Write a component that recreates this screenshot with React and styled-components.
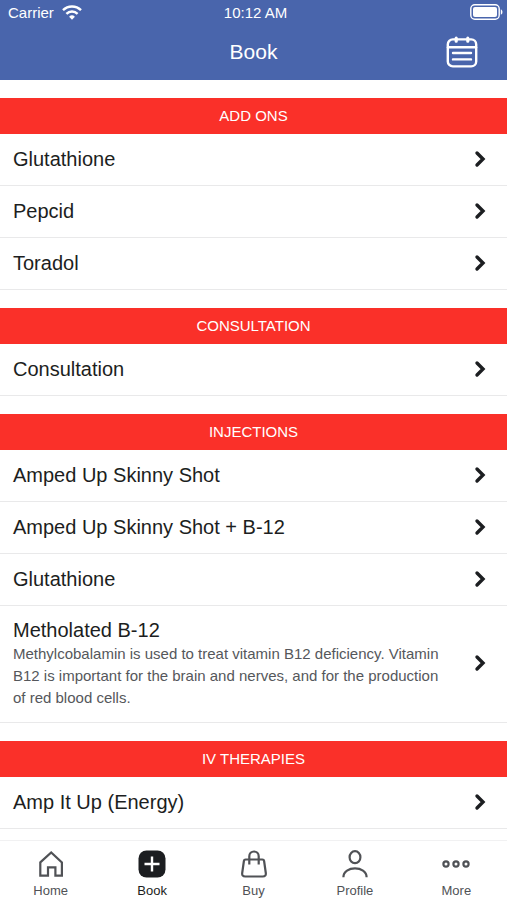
import React, { useState } from 'react'
import styled, { createGlobalStyle } from 'styled-components'

const GlobalStyle = createGlobalStyle`
  * {
    box-sizing: border-box;
  }
  body {
    margin: 0;
    background-color: #ffffff;
    color: #1c1e21;
    font-family: "Liberation Sans", Arial, sans-serif;
  }
`
const Container = styled.div`
  height: 100vh;
  display: flex;
  flex-direction: column;
  overflow: hidden;
`
const Header = styled.header`
  flex-shrink: 0;
  background-color: #4965ac;
  color: #ffffff;
`
const StatusBar = styled.div`
  height: 24px;
  padding: 0 4px 0 8px;
  display: grid;
  grid-template-columns: 1fr auto 1fr;
  align-items: center;
  font-size: 15px;
`
const Carrier = styled.div`
  display: flex;
  align-items: center;
  gap: 8px;
`
const Battery = styled.div`
  display: flex;
  justify-content: flex-end;
`
const TitleBar = styled.div`
  height: 56px;
  padding: 0 29px;
  display: grid;
  grid-template-columns: 1fr auto 1fr;
  align-items: center;
`
const Title = styled.h1`
  grid-column: 2;
  margin: 0;
  font-size: 21px;
  font-weight: 400;
`
const CalendarButton = styled.button`
  justify-self: end;
  display: flex;
  padding: 0;
  border: none;
  background: none;
  color: inherit;
  cursor: pointer;
`
const Content = styled.main`
  flex: 1;
  min-height: 0;
  overflow: hidden;
`
const Section = styled.section`
  padding-top: 18px;
`
const SectionTitle = styled.h2`
  margin: 0;
  height: 36px;
  background-color: #fa3029;
  color: #ffffff;
  font-size: 15px;
  font-weight: 400;
  line-height: 36px;
  text-align: center;
  text-transform: uppercase;
`
const Row = styled.a`
  min-height: 52px;
  padding: 11px 20px 13px 13px;
  display: flex;
  align-items: center;
  gap: 20px;
  border-bottom: 1px solid #e9e9ea;
  color: inherit;
  text-decoration: none;
`
const RowText = styled.div`
  flex: 1;
`
const Name = styled.div`
  font-size: 20px;
  line-height: 26px;
`
const Desc = styled.p`
  margin: 0;
  color: #55575b;
  font-size: 15px;
  line-height: 22px;
`
const TabBar = styled.nav`
  flex-shrink: 0;
  height: 60px;
  display: flex;
  border-top: 1px solid #f1f1f2;
  background-color: #ffffff;
`
const Tab = styled.button`
  flex: 1;
  padding: 9px 0 0;
  display: flex;
  flex-direction: column;
  align-items: center;
  gap: 5px;
  border: none;
  background: none;
  color: ${(props) => (props.$active ? '#1c1e21' : '#505256')};
  font-family: inherit;
  font-size: 13px;
  line-height: 16px;
  cursor: pointer;
`

const WifiIcon = () => (
  <svg width="20" height="15" viewBox="0 0 20 15" fill="none" stroke="currentColor" strokeWidth="2.4" aria-hidden="true">
    <path d="M1 5.2a12.7 12.7 0 0 1 18 0" />
    <path d="M4.4 8.8a7.9 7.9 0 0 1 11.2 0" />
    <path d="M10 14.8l-2.9-3a4.1 4.1 0 0 1 5.8 0z" fill="currentColor" stroke="none" />
  </svg>
)

const BatteryIcon = () => (
  <svg width="33" height="16" viewBox="0 0 33 16" fill="none" aria-hidden="true">
    <rect x="0.8" y="0.8" width="28.4" height="14.4" rx="4" stroke="currentColor" strokeWidth="1.4" />
    <rect x="3" y="3" width="24" height="10" rx="2" fill="currentColor" />
    <path d="M30.8 5.2c2.2 1 2.2 4.6 0 5.6z" fill="currentColor" />
  </svg>
)

const CalendarIcon = () => (
  <svg width="32" height="32" viewBox="0 0 32 32" fill="none" stroke="currentColor" strokeWidth="2.4" strokeLinecap="round" aria-hidden="true">
    <rect x="1.8" y="3.4" width="28.400" height="27" rx="5" />
    <path d="M2 11.200h28" />
    <path d="M7 17h18M7 23.400h18" />
    <path d="M10.200 2.200v3M21.800 2.200v3" strokeWidth="3.200" />
  </svg>
)

const ChevronIcon = () => (
  <svg width="14" height="18" viewBox="0 0 14 18" fill="none" stroke="currentColor" strokeWidth="3.4" strokeLinecap="round" aria-hidden="true">
    <path d="M4 3L10 9L4 15" />
  </svg>
)

const icons = {
  home: (
    <path d="M3.3 12.4L14.200 2.400l10.700 10v13.200h-6.500v-8.300h-7.400v8.300H3.300z" />
  ),
  book: (
    <>
      <rect x="0.5" y="0.5" width="27" height="27" rx="8" fill="currentColor" stroke="none" />
      <path d="M14 6.5v15M6.5 14h15" stroke="#ffffff" strokeWidth="2.4" />
    </>
  ),
  buy: (
    <>
      <path d="M5.6 9.500h16.800q1.500 0 1.700 1.500l1.700 12q.4 3.500-3 3.500H5.200q-3.400 0-3-3.500l1.700-12q.2-1.500 1.700-1.500z" />
      <path d="M9.300 14.500V6.200a4.700 4.700 0 0 1 9.400 0v8.300" />
    </>
  ),
  profile: (
    <>
      <ellipse cx="14" cy="7.2" rx="5.4" ry="6" />
      <path d="M2.400 27.200c0-11.800 23.200-11.800 23.200 0" />
    </>
  ),
  more: (
    <>
      <circle cx="4" cy="14" r="2.6" />
      <circle cx="14" cy="14" r="2.6" />
      <circle cx="24" cy="14" r="2.6" />
    </>
  ),
}

const TabIcon = ({ name }) => (
  <svg width="28" height="28" viewBox="0 0 28 28" fill="none" stroke="currentColor" strokeWidth="2.2" aria-hidden="true">
    {icons[name]}
  </svg>
)

const sections = [
  {
    title: 'Add ons',
    items: [{ name: 'Glutathione' }, { name: 'Pepcid' }, { name: 'Toradol' }],
  },
  {
    title: 'Consultation',
    items: [{ name: 'Consultation' }],
  },
  {
    title: 'Injections',
    items: [
      { name: 'Amped Up Skinny Shot' },
      { name: 'Amped Up Skinny Shot + B-12' },
      { name: 'Glutathione' },
      {
        name: 'Metholated B-12',
        desc: 'Methylcobalamin is used to treat vitamin B12 deficiency. Vitamin B12 is important for the brain and nerves, and for the production of red blood cells.',
      },
    ],
  },
  {
    title: 'IV Therapies',
    items: [{ name: 'Amp It Up (Energy)' }],
  },
]

const tabs = [
  { id: 'home', label: 'Home' },
  { id: 'book', label: 'Book' },
  { id: 'buy', label: 'Buy' },
  { id: 'profile', label: 'Profile' },
  { id: 'more', label: 'More' },
]

const App = () => {
  const [active, setActive] = useState('book')
  return (
    <Container>
      <GlobalStyle />
      <Header>
        <StatusBar>
          <Carrier>
            Carrier
            <WifiIcon />
          </Carrier>
          <span>10:12 AM</span>
          <Battery>
            <BatteryIcon />
          </Battery>
        </StatusBar>
        <TitleBar>
          <Title>Book</Title>
          <CalendarButton aria-label="Calendar">
            <CalendarIcon />
          </CalendarButton>
        </TitleBar>
      </Header>
      <Content>
        {sections.map((section) => (
          <Section key={section.title}>
            <SectionTitle>{section.title}</SectionTitle>
            {section.items.map((item) => (
              <Row key={item.name} href="#">
                <RowText>
                  <Name>{item.name}</Name>
                  {item.desc && <Desc>{item.desc}</Desc>}
                </RowText>
                <ChevronIcon />
              </Row>
            ))}
          </Section>
        ))}
      </Content>
      <TabBar>
        {tabs.map((tab) => (
          <Tab key={tab.id} $active={active === tab.id} onClick={() => setActive(tab.id)}>
            <TabIcon name={tab.id} />
            {tab.label}
          </Tab>
        ))}
      </TabBar>
    </Container>
  )
}

export default App
